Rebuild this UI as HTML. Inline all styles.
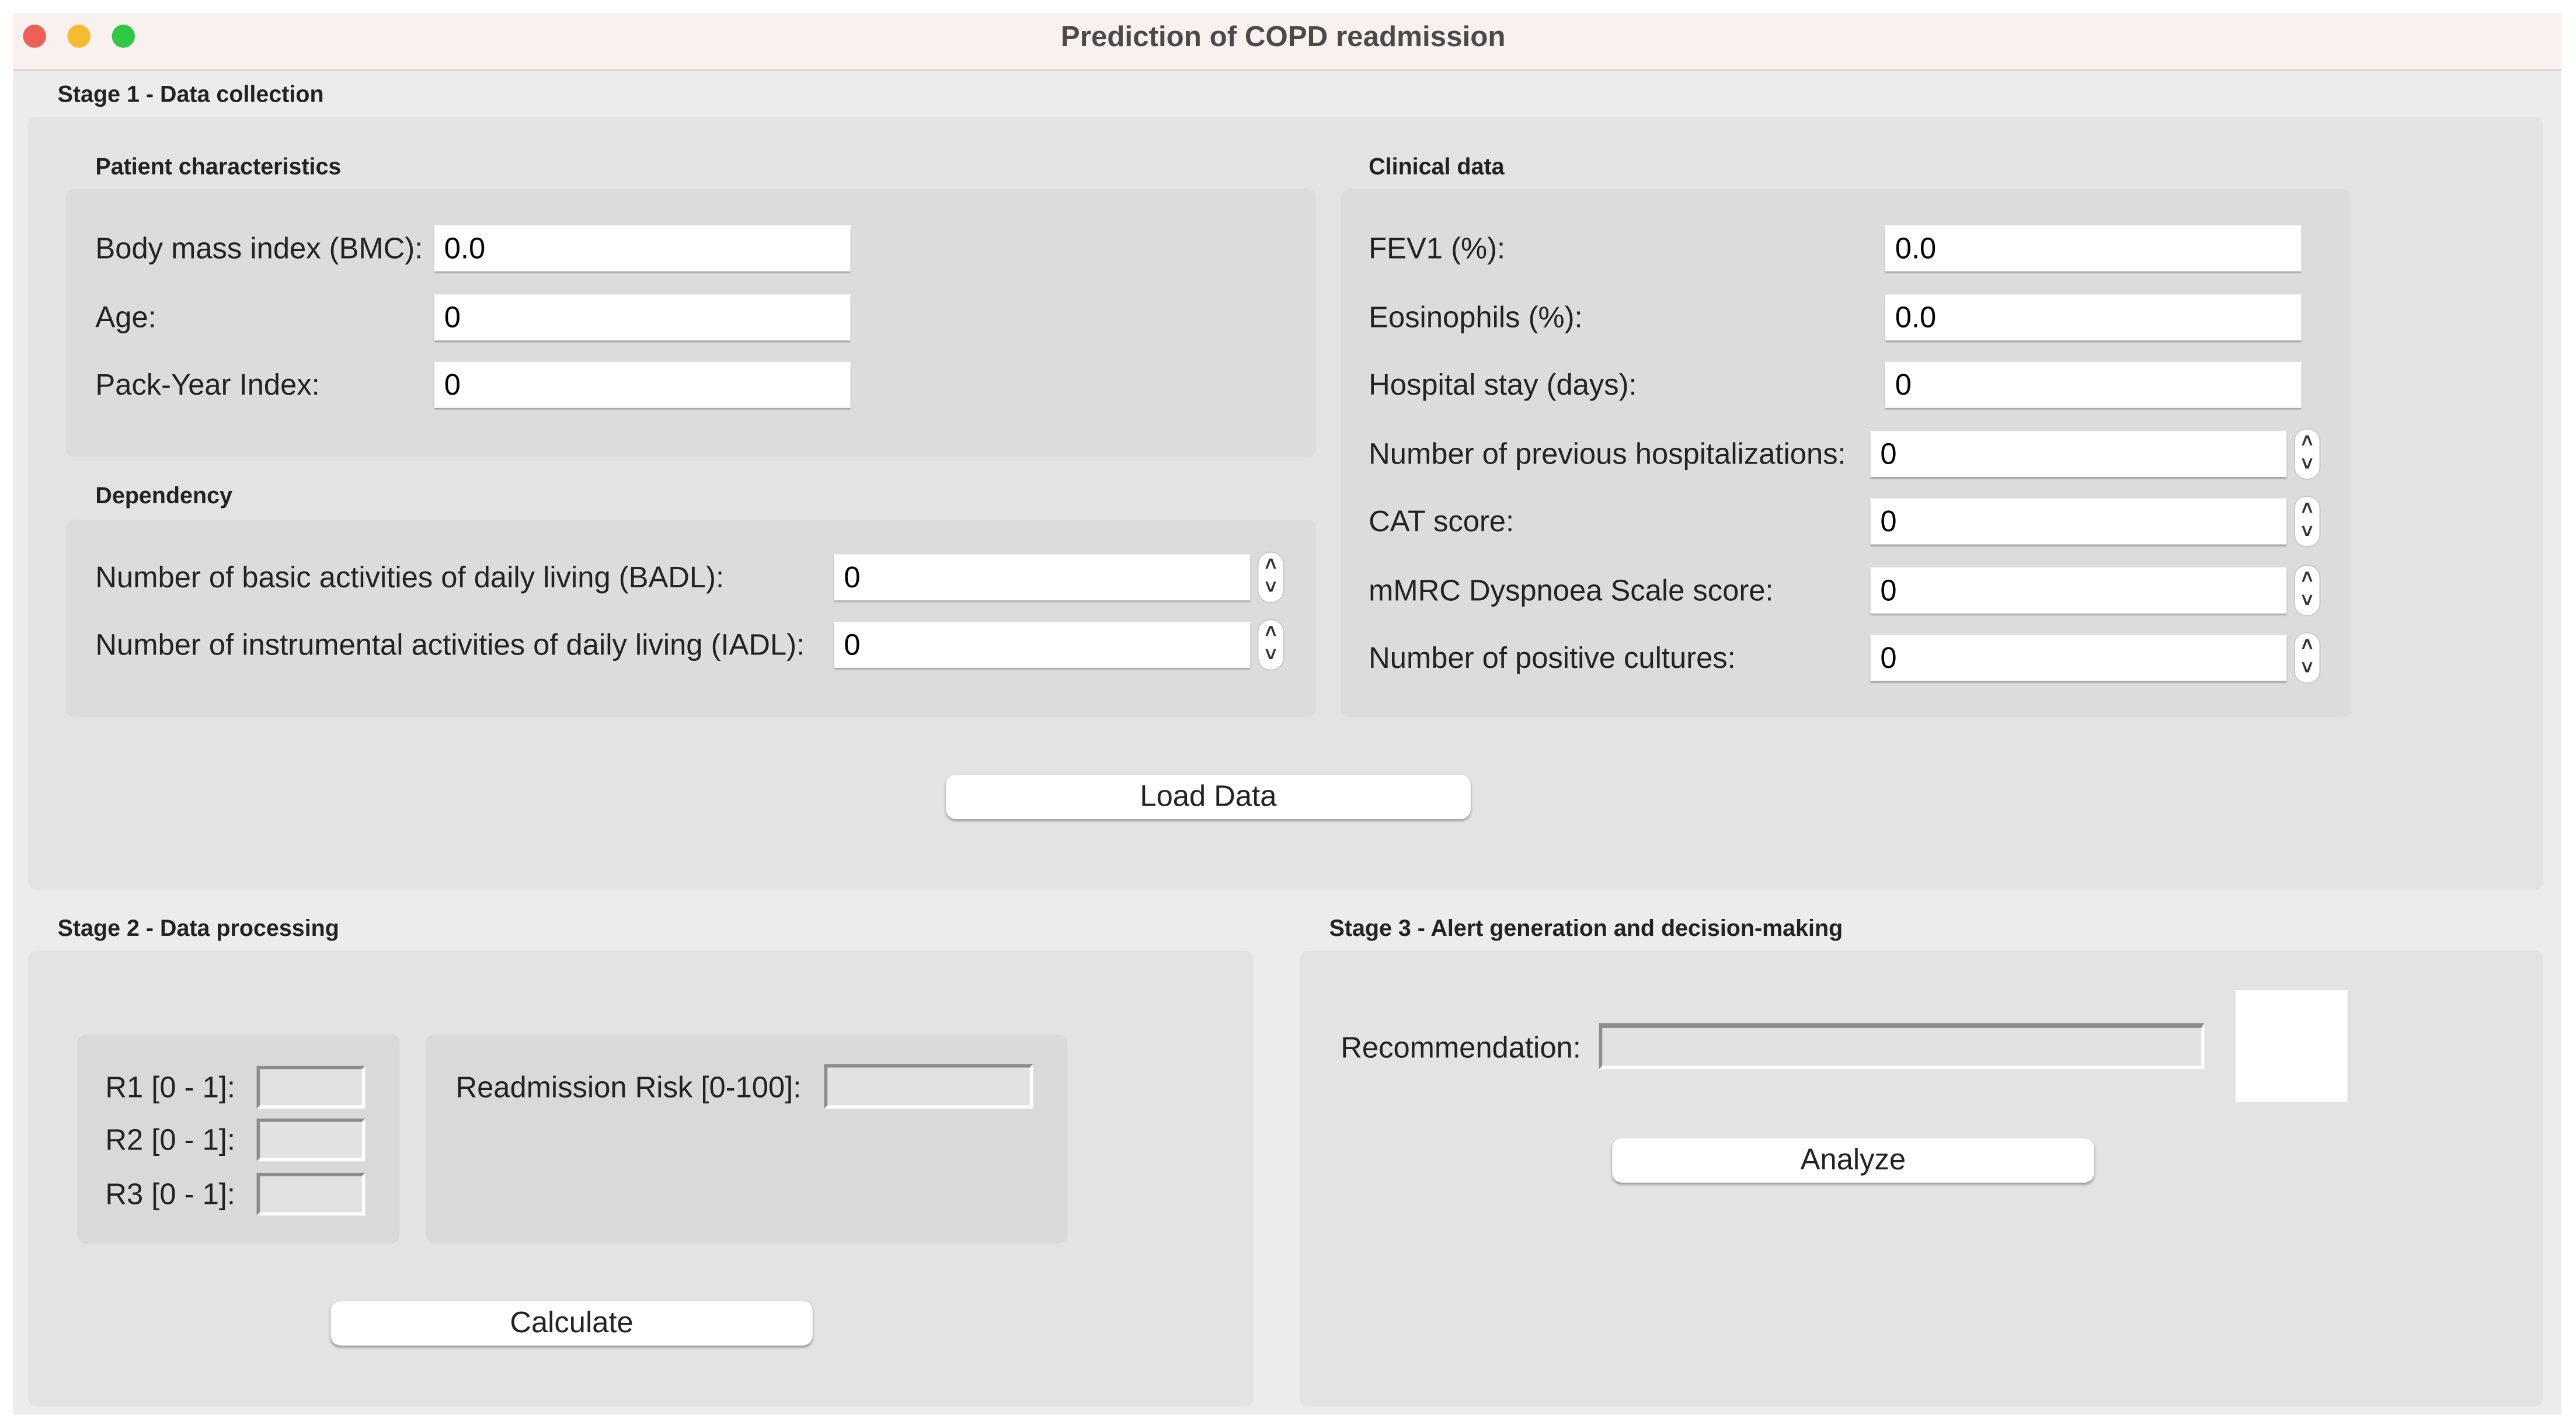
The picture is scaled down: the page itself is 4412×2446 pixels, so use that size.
<!DOCTYPE html>
<html><head><meta charset="utf-8"><style>
html,body{margin:0;padding:0;background:#fff;width:4412px;height:2446px;overflow:hidden}
#s{position:absolute;left:0;top:0;width:1564px;height:867px;transform:scale(2.8175);transform-origin:0 0;font-family:"Liberation Sans",sans-serif;color:#222}
.a{position:absolute}
.h{position:absolute;font-weight:bold;font-size:14px;color:#222;line-height:14px;white-space:nowrap}
.l{position:absolute;font-size:18px;line-height:20px;color:#222;white-space:nowrap}
.in{position:absolute;background:#fff;box-shadow:0 1px 1px rgba(0,0,0,.3);font-size:18px;line-height:28px;padding-left:6px;box-sizing:border-box;height:28px;color:#000}
.sp{position:absolute;width:15px;height:30px;background:#fff;border-radius:7px;box-shadow:0 0 1px rgba(0,0,0,.4);font-size:12px;font-weight:bold;line-height:14px;text-align:center;color:#333}
.pn{position:absolute;border-radius:5px}
.btn{position:absolute;background:#fff;border-radius:6px;box-shadow:0 1px 1.5px rgba(0,0,0,.35);text-align:center;font-size:18px;line-height:27px;height:27px;color:#222}
.sk{position:absolute;background:#e2e2e2;border-top:2px solid #8c8c8c;border-left:2px solid #8c8c8c;border-right:2px solid #fff;border-bottom:2px solid #fff;box-sizing:border-box}
</style></head><body><div id="s">
<div class="a" style="left:8px;top:8px;width:1549px;height:852px;background:#ececec"></div>
<div class="a" style="left:8px;top:8px;width:1549px;height:34px;background:#f8f1ee;border-bottom:1px solid #d6d2d0"></div>
<div class="a" style="left:14px;top:15px;width:14px;height:14px;border-radius:50%;background:#ee5f57"></div>
<div class="a" style="left:41px;top:15px;width:14px;height:14px;border-radius:50%;background:#f6bc2f"></div>
<div class="a" style="left:68px;top:15px;width:14px;height:14px;border-radius:50%;background:#2ec843"></div>
<div class="a" style="left:480px;top:12px;width:600px;text-align:center;font-weight:bold;font-size:17.5px;line-height:20px;color:#4a4a4a">Prediction of COPD readmission</div>

<div class="h" style="left:35px;top:50px">Stage 1 - Data collection</div>
<div class="pn" style="left:17px;top:71px;width:1529px;height:470px;background:#e3e3e3"></div>
<div class="h" style="left:58px;top:94px">Patient characteristics</div>
<div class="pn" style="left:40px;top:115px;width:760px;height:163px;background:#dcdcdc"></div>
<div class="l" style="left:58px;top:141px">Body mass index (BMC):</div>
<div class="in" style="left:264px;top:137px;width:253px">0.0</div>
<div class="l" style="left:58px;top:183px">Age:</div>
<div class="in" style="left:264px;top:179px;width:253px">0</div>
<div class="l" style="left:58px;top:224px">Pack-Year Index:</div>
<div class="in" style="left:264px;top:220px;width:253px">0</div>

<div class="h" style="left:58px;top:294px">Dependency</div>
<div class="pn" style="left:40px;top:316px;width:760px;height:120px;background:#dcdcdc"></div>
<div class="l" style="left:58px;top:341px">Number of basic activities of daily living (BADL):</div>
<div class="in" style="left:507px;top:337px;width:253px">0</div>
<div class="sp" style="left:765px;top:336px">˄<br>˅</div>
<div class="l" style="left:58px;top:382px">Number of instrumental activities of daily living (IADL):</div>
<div class="in" style="left:507px;top:378px;width:253px">0</div>
<div class="sp" style="left:765px;top:377px">˄<br>˅</div>

<div class="h" style="left:832px;top:94px">Clinical data</div>
<div class="pn" style="left:815px;top:115px;width:614px;height:321px;background:#dcdcdc"></div>
<div class="l" style="left:832px;top:141px">FEV1 (%):</div>
<div class="in" style="left:1146px;top:137px;width:253px">0.0</div>
<div class="l" style="left:832px;top:183px">Eosinophils (%):</div>
<div class="in" style="left:1146px;top:179px;width:253px">0.0</div>
<div class="l" style="left:832px;top:224px">Hospital stay (days):</div>
<div class="in" style="left:1146px;top:220px;width:253px">0</div>
<div class="l" style="left:832px;top:266px">Number of previous hospitalizations:</div>
<div class="in" style="left:1137px;top:262px;width:253px">0</div>
<div class="sp" style="left:1395px;top:261px">˄<br>˅</div>
<div class="l" style="left:832px;top:307px">CAT score:</div>
<div class="in" style="left:1137px;top:303px;width:253px">0</div>
<div class="sp" style="left:1395px;top:302px">˄<br>˅</div>
<div class="l" style="left:832px;top:349px">mMRC Dyspnoea Scale score:</div>
<div class="in" style="left:1137px;top:345px;width:253px">0</div>
<div class="sp" style="left:1395px;top:344px">˄<br>˅</div>
<div class="l" style="left:832px;top:390px">Number of positive cultures:</div>
<div class="in" style="left:1137px;top:386px;width:253px">0</div>
<div class="sp" style="left:1395px;top:385px">˄<br>˅</div>

<div class="btn" style="left:575px;top:471px;width:319px">Load Data</div>

<div class="h" style="left:35px;top:557px">Stage 2 - Data processing</div>
<div class="pn" style="left:17px;top:578px;width:745px;height:277px;background:#e3e3e3"></div>
<div class="pn" style="left:47px;top:629px;width:196px;height:127px;background:#d9d9d9"></div>
<div class="l" style="left:64px;top:651px">R1 [0 - 1]:</div>
<div class="sk" style="left:156px;top:648px;width:66px;height:26px"></div>
<div class="l" style="left:64px;top:683px">R2 [0 - 1]:</div>
<div class="sk" style="left:156px;top:680px;width:66px;height:26px"></div>
<div class="l" style="left:64px;top:716px">R3 [0 - 1]:</div>
<div class="sk" style="left:156px;top:713px;width:66px;height:26px"></div>
<div class="pn" style="left:259px;top:629px;width:390px;height:127px;background:#d9d9d9"></div>
<div class="l" style="left:277px;top:651px">Readmission Risk [0-100]:</div>
<div class="sk" style="left:501px;top:647px;width:127px;height:27px"></div>
<div class="btn" style="left:201px;top:791px;width:293px">Calculate</div>

<div class="h" style="left:808px;top:557px">Stage 3 - Alert generation and decision-making</div>
<div class="pn" style="left:790px;top:578px;width:756px;height:277px;background:#e3e3e3"></div>
<div class="l" style="left:815px;top:627px">Recommendation:</div>
<div class="sk" style="left:972px;top:622px;width:368px;height:28px;border-top-width:3px"></div>
<div class="a" style="left:1359px;top:602px;width:68px;height:68px;background:#fff"></div>
<div class="btn" style="left:980px;top:692px;width:293px">Analyze</div>
</div></body></html>
